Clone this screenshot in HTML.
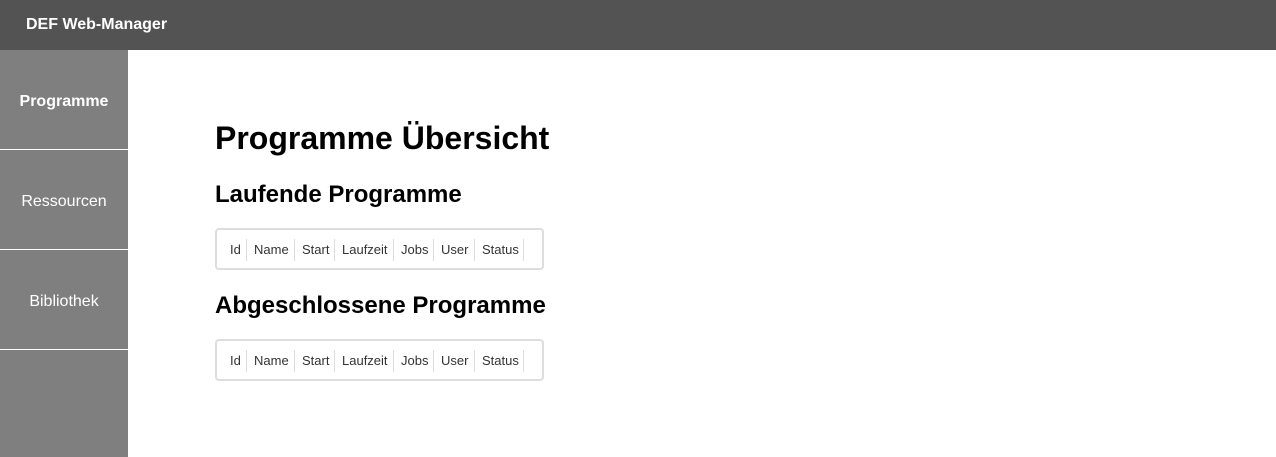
<!DOCTYPE html>
<html><head><meta charset="utf-8"><style>
*{margin:0;padding:0;box-sizing:border-box}
body{width:1276px;height:457px;overflow:hidden;background:#fff;font-family:"Liberation Sans",Arial,sans-serif;position:relative}
.hdr{position:absolute;left:0;top:0;width:1276px;height:50px;background:#535353;color:#fff;font-weight:bold;font-size:16px;line-height:50px;padding-left:26px}
.side{position:absolute;left:0;top:50px;width:128px;height:407px;background:#7f7f7f}
.it{height:100px;border-bottom:1px solid #fff;color:#fff;font-size:16px;text-align:center;line-height:103px}
.it.b{font-weight:bold}
h1{position:absolute;left:215px;top:120px;font-size:32px;font-weight:bold;color:#000}
h2{position:absolute;left:215px;font-size:24px;font-weight:bold;color:#000}
.tbl{position:absolute;left:215px;width:329px;height:42px;border:2px solid #ddd;border-radius:4px;font-size:13px;color:#333}
.tbl span{position:absolute;top:9px;height:22px;line-height:22px;border-right:1px solid #ddd;padding:0 7px}
</style></head><body>
<div class="hdr">DEF Web-Manager</div>
<div class="side"><div class="it b">Programme</div><div class="it">Ressourcen</div><div class="it">Bibliothek</div></div>
<h1>Programme Übersicht</h1>
<h2 style="top:181px">Laufende Programme</h2>
<div class="tbl" style="top:228px">
<span style="left:6px;width:24px">Id</span><span style="left:30px;width:48px">Name</span><span style="left:78px;width:40px">Start</span><span style="left:118px;width:59px">Laufzeit</span><span style="left:177px;width:40px">Jobs</span><span style="left:217px;width:41px">User</span><span style="left:258px;width:49px">Status</span>
</div>
<h2 style="top:292px">Abgeschlossene Programme</h2>
<div class="tbl" style="top:339px">
<span style="left:6px;width:24px">Id</span><span style="left:30px;width:48px">Name</span><span style="left:78px;width:40px">Start</span><span style="left:118px;width:59px">Laufzeit</span><span style="left:177px;width:40px">Jobs</span><span style="left:217px;width:41px">User</span><span style="left:258px;width:49px">Status</span>
</div>
</body></html>
